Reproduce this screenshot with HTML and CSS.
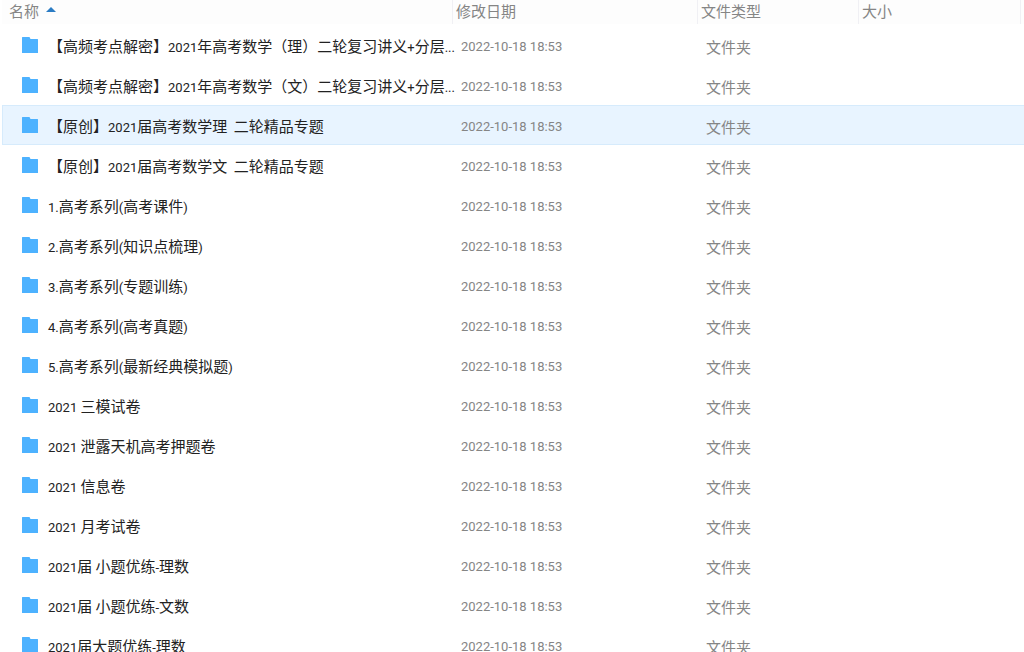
FILE: index.html
```html
<!DOCTYPE html>
<html lang="zh-CN">
<head>
<meta charset="utf-8">
<title>文件列表</title>
<link rel="stylesheet" href="styles.css">
</head>
<body>
<table class="files">
<colgroup><col><col class="col-date"><col class="col-type"><col class="col-size"></colgroup>
<thead>
<tr>
<th scope="col" aria-sort="ascending"><button class="sort" type="button">名称<svg class="arrow" viewBox="0 0 10 5" aria-hidden="true"><path d="M0 5 5 0l5 5z"/></svg></button></th>
<th scope="col"><button class="sort" type="button">修改日期</button></th>
<th scope="col"><button class="sort" type="button">文件类型</button></th>
<th scope="col"><button class="sort" type="button">大小</button></th>
</tr>
</thead>
<tbody id="rows"></tbody>
</table>
<script src="files.js"></script>
</body>
</html>
```
FILE: files.js
```js
const names = [
  "【高频考点解密】2021年高考数学（理）二轮复习讲义+分层...",
  "【高频考点解密】2021年高考数学（文）二轮复习讲义+分层...",
  "【原创】2021届高考数学理  二轮精品专题",
  "【原创】2021届高考数学文  二轮精品专题",
  "1.高考系列(高考课件)",
  "2.高考系列(知识点梳理)",
  "3.高考系列(专题训练)",
  "4.高考系列(高考真题)",
  "5.高考系列(最新经典模拟题)",
  "2021 三模试卷",
  "2021 泄露天机高考押题卷",
  "2021 信息卷",
  "2021 月考试卷",
  "2021届 小题优练-理数",
  "2021届 小题优练-文数",
  "2021届大题优练-理数"
];
const selected = 2;
const icon = '<svg class="folder" viewBox="0 0 16 16" aria-hidden="true"><path d="M0 0.5Q0 0 0.5 0H7.5L8.5 2H15.5Q16 2 16 2.5V16H0Z"/></svg>';

// Latin runs are set smaller than the Chinese text around them.
const markLatin = text => text.replace(/[\x20-\x7e]+/g, '<span class="latin">$&</span>');

document.getElementById("rows").innerHTML = names.map((name, i) =>
  `<tr class="row${i === selected ? " selected" : ""}">
    <td><div class="name">${icon}<span class="label">${markLatin(name)}</span></div></td>
    <td class="latin">2022-10-18 18:53</td>
    <td>文件夹</td>
    <td></td>
  </tr>`).join("");
```
FILE: styles.css
```css
body {
  margin: 0;
  padding-left: 2px;
  background: #fff;
  color: #858585;
  font: 15px/20px "Noto Sans CJK SC", sans-serif;
  overflow: hidden;
}

.files {
  width: 100%;
  table-layout: fixed;
  border-collapse: separate;
  border-spacing: 0;
}

.col-date { width: 245px; }
.col-type { width: 161px; }
.col-size { width: 165px; }

th {
  height: 24px;
  padding: 0;
  background: #fdfdfd;
  font-weight: normal;
  text-align: left;
}

.sort {
  display: flex;
  align-items: center;
  gap: 7px;
  box-sizing: border-box;
  width: 100%;
  height: 24px;
  padding: 0 0 2px 3px;
  border: 0;
  border-right: 1px solid #f0f0f4;
  background: none;
  color: inherit;
  font: inherit;
}

th:first-child .sort { padding-left: 7px; }
th:last-child .sort { width: 162px; }

.arrow {
  width: 10px;
  height: 5px;
  margin-bottom: 3px;
  fill: #2b7cc4;
}

tbody::before {
  content: "";
  display: block;
  height: 1px;
}

.row td {
  box-sizing: border-box;
  height: 40px;
  padding: 4px 0 0 8px;
  border: solid transparent;
  border-width: 1px 0;
}

.row td:first-child {
  padding-left: 19px;
  border-left-width: 1px;
}

.selected td {
  background: #e8f4ff;
  border-color: #d6ebfc;
}

.name {
  display: flex;
  align-items: center;
  gap: 10px;
  color: #222;
}

.folder {
  flex: none;
  width: 16px;
  height: 16px;
  margin-bottom: 4px;
  fill: #4db2ff;
}

.label { white-space: pre; }

.latin {
  font-family: Roboto, "Noto Sans", sans-serif;
  font-size: 13px;
}
```
